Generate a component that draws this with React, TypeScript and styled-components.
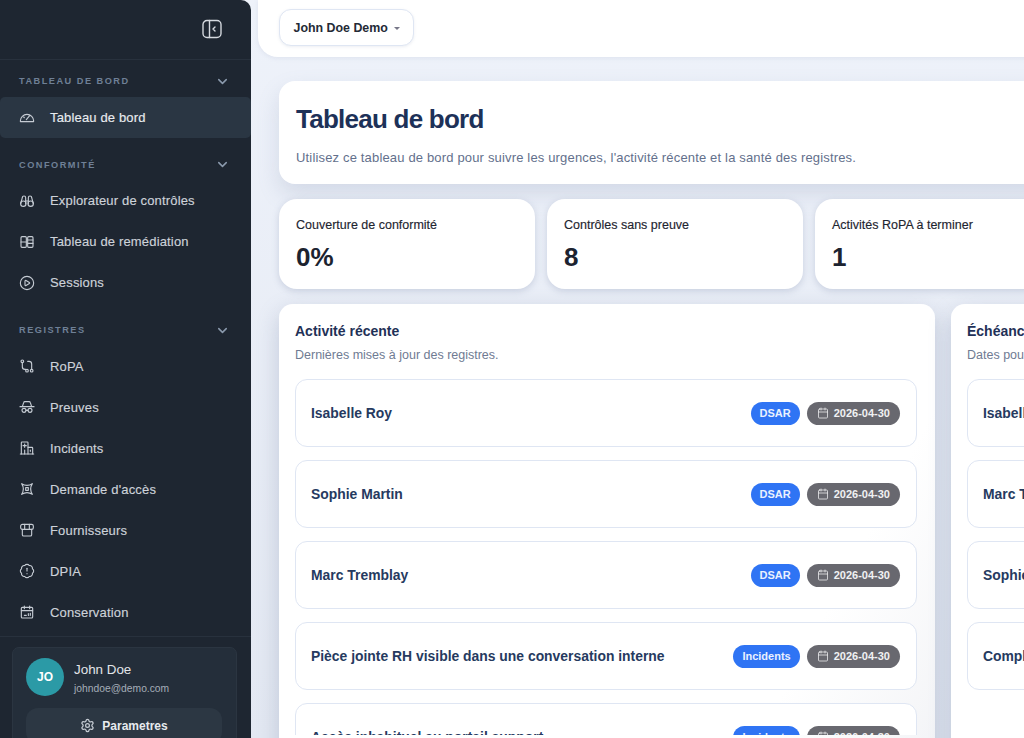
import React from "react";
import styled, { createGlobalStyle } from "styled-components";
import { BadgeAlert, Calendar, ChevronDown, CirclePlay, Settings } from "lucide-react";

const Global = createGlobalStyle`
  html, body { margin: 0; height: 100%; overflow: hidden; }
  body { font-family: "Liberation Sans", Arial, sans-serif; background: #e9eef7; }
  * { box-sizing: border-box; }
`;

const Shell = styled.div`display: flex; width: 1024px; height: 738px; overflow: hidden; background: linear-gradient(180deg, #eef2fa 0%, #e3e8f2 100%);`;
const Sidebar = styled.aside`flex: 0 0 251px; height: 738px; background: #1e2631; border-radius: 0 10px 0 0; display: flex; flex-direction: column; overflow: hidden;`;
const SideTop = styled.div`height: 60px; flex: none; display: flex; align-items: center; justify-content: flex-end; padding: 0 29px 2px 0; border-bottom: 1px solid #28313d; color: #d5d9df;`;
const Nav = styled.nav`flex: 1; display: flex; flex-direction: column; padding-top: 12px; min-height: 0;`;
const SectionHead = styled.div<{ $top?: number }>`height: 18px; margin: ${(p) => p.$top ?? 0}px 0 6.5px; flex: none; padding: 0 21px 0 19px; display: flex; align-items: center; justify-content: space-between; font-size: 9.2px; font-weight: 700; letter-spacing: 1.5px; color: #6f8096; svg { width: 15px; height: 15px; color: #8b9aad; stroke-width: 2.4; }`;
const Item = styled.div<{ $active?: boolean }>`height: 41px; flex: none; display: flex; align-items: center; gap: 15px; padding-left: 19px; font-size: 13px; letter-spacing: 0.16px; color: ${(p) => (p.$active ? "#e8ebef" : "#cdd2d9")}; background: ${(p) => (p.$active ? "#2a3643" : "transparent")}; border-radius: 5px; -webkit-text-stroke: 0.15px currentColor; svg { width: 16px; height: 16px; color: #c5cbd3; flex: none; }`;
const SideFoot = styled.div`flex: none; height: 102px; border-top: 1px solid #28313d; padding: 10px 14px 0 12px;`;
const UserCard = styled.div`height: 110px; background: #242e3a; border: 1px solid #2b3541; border-radius: 7px; padding: 10px 14px 10px 13px;`;
const UserRow = styled.div`display: flex; align-items: flex-start; gap: 10px;`;
const Avatar = styled.div`width: 38px; height: 38px; border-radius: 50%; background: #2b9aa6; color: #fff; font-size: 12px; font-weight: 700; display: flex; align-items: center; justify-content: center;`;
const UserText = styled.div`padding-top: 2.5px;`;
const UserName = styled.div`font-size: 13.4px; color: #e2e5e9; line-height: 17px;`;
const UserMail = styled.div`font-size: 10.3px; color: #a4adb8; line-height: 16px; margin-top: 3px;`;
const SettingsBtn = styled.div`margin-top: 11px; height: 36px; background: #2c3743; border-radius: 12px; display: flex; align-items: center; justify-content: center; gap: 7px; font-size: 12px; font-weight: 700; color: #e7eaee; svg { width: 15px; height: 15px; color: #c5cbd3; }`;

const Main = styled.main`flex: 1; min-width: 0; padding-left: 7px; display: flex; flex-direction: column;`;
const TopBar = styled.header`height: 57px; flex: none; width: 800px; background: #fff; border-radius: 0 0 0 20px; box-shadow: 0 1px 5px rgba(120,135,170,.14); padding: 9px 0 0 21px;`;
const OrgButton = styled.div`width: 135px; height: 37px; background: #fff; border: 1px solid #dfe6f3; border-radius: 12px; box-shadow: 0 1px 3px rgba(120,135,170,.14); display: flex; align-items: center; padding-left: 13.5px; font-size: 12.4px; font-weight: 700; color: #242a36;`;
const Caret = styled.span`width: 0; height: 0; margin-left: 6px; margin-top: 1px; border-left: 3px solid transparent; border-right: 3px solid transparent; border-top: 3px solid #778;`;
const Content = styled.div`padding: 24px 0 0 21px; width: 800px; display: flex; flex-direction: column; gap: 15px;`;
const Hero = styled.section`height: 103px; background: #fff; border-radius: 16px; box-shadow: 0 10px 22px rgba(110,125,160,.2); padding: 21px 17px;`;
const Title = styled.h1`margin: 0; font-size: 26px; line-height: 34px; font-weight: 700; letter-spacing: -0.75px; color: #1d3158;`;
const Subtitle = styled.p`margin: 13px 0 0; font-size: 13px; line-height: 18px; letter-spacing: 0.165px; color: #63708c;`;
const Stats = styled.div`display: flex; gap: 12px;`;
const StatCard = styled.div`flex: 0 0 256px; height: 90px; background: #fff; border-radius: 18px; box-shadow: 0 2px 7px rgba(110,125,160,.28); padding: 19px 17px;`;
const StatLabel = styled.div`font-size: 12.5px; line-height: 15px; color: #1e2530; -webkit-text-stroke: 0.15px currentColor;`;
const StatValue = styled.div`margin-top: 8px; font-size: 26px; line-height: 32px; font-weight: 700; color: #1c2330;`;
const Panels = styled.div`display: flex; gap: 16px;`;
const Panel = styled.section<{ $w: number }>`flex: 0 0 ${(p) => p.$w}px; height: 480px; background: linear-gradient(118deg, #fff 78%, #f2f3f6 100%); border-radius: 14px; box-shadow: 0 8px 22px rgba(110,125,160,.32); padding: 18px 16px;`;
const PanelTitle = styled.h2`margin: 0; font-size: 14px; line-height: 18px; font-weight: 700; color: #1f3157; white-space: nowrap;`;
const PanelSub = styled.p`margin: 7px 0 0; font-size: 12.5px; line-height: 16px; color: #6f7b93; white-space: nowrap;`;
const Rows = styled.div`margin-top: 16px; height: 356px; overflow: hidden; display: flex; flex-direction: column; gap: 13px;`;
const Row = styled.div<{ $w: number }>`width: ${(p) => p.$w}px; height: 68px; flex: none; background: #fff; border: 1px solid #dfe6f3; border-radius: 12px; display: flex; align-items: center; justify-content: space-between; padding: 0 16px 0 15px;`;
const RowName = styled.div`font-size: 13.9px; font-weight: 700; color: #263a60; white-space: nowrap;`;
const Tags = styled.div`display: flex; gap: 7px; align-items: center;`;
const TypeTag = styled.span`height: 23px; padding: 0 9px; border-radius: 12px; background: #2f74f4; color: #eaf1fe; font-size: 11px; font-weight: 700; display: flex; align-items: center;`;
const DateTag = styled.span`height: 23px; padding: 0 10px; border-radius: 12px; background: #68686f; color: #f1f1f3; font-size: 11px; font-weight: 700; display: flex; align-items: center; gap: 5px; svg { width: 12px; height: 12px; stroke-width: 1.5; }`;
const IconSvg = styled.svg`fill: none; stroke: currentColor; stroke-width: 1.7; stroke-linecap: round; stroke-linejoin: round;`;
const ToggleSvg = styled.svg`width: 20px; height: 20px; fill: none; stroke: currentColor; stroke-width: 1.4; stroke-linecap: round; stroke-linejoin: round;`;

const Ico = ({ children }: { children: React.ReactNode }) => <IconSvg viewBox="0 0 24 24">{children}</IconSvg>;

const GaugeIcon = () => <Ico><path d="M2.5 19a1 1 0 0 1-.5-1 10 10 0 1 1 20 0 1 1 0 0 1-.5 1z" /><path d="m11 16 5-6" /><path d="M7 12l1 1" /></Ico>;
const BinocularsIcon = () => <Ico><circle cx="6.5" cy="16" r="4" /><circle cx="17.5" cy="16" r="4" /><path d="M2.5 16 5 7a2.5 2.5 0 0 1 5 0v9" /><path d="M21.5 16 19 7a2.5 2.5 0 0 0-5 0v9" /><path d="M10 12h4" /></Ico>;
const KanbanIcon = () => <Ico><rect x="3" y="4" width="8" height="16" rx="1.5" /><rect x="13" y="4" width="8" height="16" rx="1.5" /><path d="M3 12h8M13 9h8M13 14h8" /></Ico>;
const RouteIcon = () => <Ico><circle cx="5" cy="5" r="2" /><circle cx="12" cy="19" r="2" /><circle cx="19" cy="19" r="2" /><path d="M5 7v6a4 4 0 0 0 4 4h1" /><path d="M13 5h2a4 4 0 0 1 4 4v8" /></Ico>;
const SpyIcon = () => <Ico><path d="M1.500 11.500h21" /><path d="M5 11.500 7 5.500a2 2 0 0 1 2-1.500h6a2 2 0 0 1 2 1.500l2 6" /><circle cx="7.500" cy="17" r="3" /><circle cx="16.500" cy="17" r="3" /><path d="M10.500 17h3" /></Ico>;
const BuildingIcon = () => <Ico><path d="M2 21h20" /><path d="M3.500 21V4a1 1 0 0 1 1-1h8a1 1 0 0 1 1 1v17" /><path d="M13.500 11h6a1 1 0 0 1 1 1v9" /><path d="M8.500 6v5M6 8.500h5" /><path d="M8.500 15v6M17 15v2" /></Ico>;
const PinchIcon = () => <Ico><path d="M4 4q8 5 16 0q-5 8 0 16q-8-5-16 0q5-8 0-16z" /><path d="M10 10h4v4h-4z" /></Ico>;
const StoreIcon = () => <Ico><path d="M5 11v8a2 2 0 0 0 2 2h10a2 2 0 0 0 2-2v-8" /><rect x="2.500" y="3.500" width="19" height="7.500" rx="2.500" /><path d="M8.500 3.500v7.500M15.500 3.500v7.500" /></Ico>;
const ScheduleIcon = () => <Ico><rect x="3.500" y="5" width="17" height="16" rx="1.500" /><path d="M3.500 10h17M8 3v4M16 3v4" /><path d="M8 17h3M14 17h.5M14 14.500V17M17 14v3" /></Ico>;

const dash = [{ icon: <GaugeIcon />, label: "Tableau de bord", active: true }];
const conf = [
  { icon: <BinocularsIcon />, label: "Explorateur de contrôles" },
  { icon: <KanbanIcon />, label: "Tableau de remédiation" },
  { icon: <CirclePlay strokeWidth={1.7} />, label: "Sessions" },
];
const reg = [
  { icon: <RouteIcon />, label: "RoPA" },
  { icon: <SpyIcon />, label: "Preuves" },
  { icon: <BuildingIcon />, label: "Incidents" },
  { icon: <PinchIcon />, label: "Demande d'accès" },
  { icon: <StoreIcon />, label: "Fournisseurs" },
  { icon: <BadgeAlert strokeWidth={1.7} />, label: "DPIA" },
  { icon: <ScheduleIcon />, label: "Conservation" },
];
const activity = [
  ["Isabelle Roy", "DSAR"],
  ["Sophie Martin", "DSAR"],
  ["Marc Tremblay", "DSAR"],
  ["Pièce jointe RH visible dans une conversation interne", "Incidents"],
  ["Accès inhabituel au portail support", "Incidents"],
];
const deadlines = ["Isabelle Roy", "Marc Tremblay", "Sophie Martin", "Complément d'information"];

type NavEntry = { icon: React.ReactNode; label: string; active?: boolean };
const renderItems = (items: NavEntry[]) =>
  items.map((i) => (
    <Item key={i.label} $active={i.active}>
      {i.icon}
      {i.label}
    </Item>
  ));

export default function App() {
  return (
    <Shell>
      <Global />
      <Sidebar>
        <SideTop>
          <ToggleSvg viewBox="0 0 20 20">
            <rect x="1" y="1.500" width="18" height="17" rx="4" />
            <path d="M7.500 1.500v17" />
            <path d="m13 8-2 2 2 2" />
          </ToggleSvg>
        </SideTop>
        <Nav>
          <SectionHead>TABLEAU DE BORD<ChevronDown /></SectionHead>
          {renderItems(dash)}
          <SectionHead $top={18}>CONFORMITÉ<ChevronDown /></SectionHead>
          {renderItems(conf)}
          <SectionHead $top={18}>REGISTRES<ChevronDown /></SectionHead>
          {renderItems(reg)}
        </Nav>
        <SideFoot>
          <UserCard>
            <UserRow>
              <Avatar>JO</Avatar>
              <UserText>
                <UserName>John Doe</UserName>
                <UserMail>johndoe@demo.com</UserMail>
              </UserText>
            </UserRow>
            <SettingsBtn><Settings />Parametres</SettingsBtn>
          </UserCard>
        </SideFoot>
      </Sidebar>
      <Main>
        <TopBar>
          <OrgButton>John Doe Demo<Caret /></OrgButton>
        </TopBar>
        <Content>
          <Hero>
            <Title>Tableau de bord</Title>
            <Subtitle>Utilisez ce tableau de bord pour suivre les urgences, l'activité récente et la santé des registres.</Subtitle>
          </Hero>
          <Stats>
            <StatCard><StatLabel>Couverture de conformité</StatLabel><StatValue>0%</StatValue></StatCard>
            <StatCard><StatLabel>Contrôles sans preuve</StatLabel><StatValue>8</StatValue></StatCard>
            <StatCard><StatLabel>Activités RoPA à terminer</StatLabel><StatValue>1</StatValue></StatCard>
          </Stats>
          <Panels>
            <Panel $w={656}>
              <PanelTitle>Activité récente</PanelTitle>
              <PanelSub>Dernières mises à jour des registres.</PanelSub>
              <Rows>
                {activity.map(([name, type]) => (
                  <Row key={name} $w={622}>
                    <RowName>{name}</RowName>
                    <Tags>
                      <TypeTag>{type}</TypeTag>
                      <DateTag><Calendar />2026-04-30</DateTag>
                    </Tags>
                  </Row>
                ))}
              </Rows>
            </Panel>
            <Panel $w={400}>
              <PanelTitle>Échéances à venir</PanelTitle>
              <PanelSub>Dates pour les prochains suivis.</PanelSub>
              <Rows>
                {deadlines.map((name) => (
                  <Row key={name} $w={368}><RowName>{name}</RowName></Row>
                ))}
              </Rows>
            </Panel>
          </Panels>
        </Content>
      </Main>
    </Shell>
  );
}
